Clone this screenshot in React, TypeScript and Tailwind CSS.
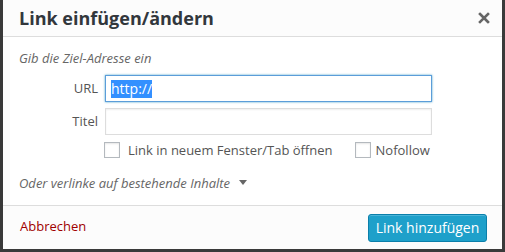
import React from "react";

export default function App() {
  const font = { fontFamily: '"Open Sans", "Noto Sans", sans-serif' };
  return (
    <div className="w-[505px] h-[252px] bg-[#3a3a3a] overflow-hidden" style={font}>
      <div className="ml-[3px] w-[499px] h-[249px] bg-white flex flex-col">
        <div className="h-[37px] shrink-0 bg-[#fcfcfc] border-b border-[#dddddd] flex items-center justify-between pl-[16px] pr-[12px]">
          <div className="text-[18px] font-bold text-[#32373c] leading-none">Link einfügen/ändern</div>
          <svg width="12" height="12" viewBox="0 0 12 12">
            <path d="M2 2 L10 10 M10 2 L2 10" stroke="#666666" strokeWidth="2.6" strokeLinecap="square" />
          </svg>
        </div>
        <div className="flex-1 flex flex-col">
          <div className="mt-[12px] pl-[16px] text-[13px] leading-[18px] italic text-[#666666]">Gib die Ziel-Adresse ein</div>
          <div className="mt-[8px] flex items-center">
            <div className="w-[95px] text-right text-[13px] text-[#555555]">URL</div>
            <div className="ml-[7px] w-[327px] h-[27px] border border-[#5b9dd9] shadow-[0_0_2px_rgba(30,140,190,0.8)] flex items-center pl-[5px]">
              <span className="bg-[#3390ff] text-white text-[14px] leading-[18px]">http://</span>
            </div>
          </div>
          <div className="mt-[6px] flex items-center">
            <div className="w-[95px] text-right text-[13px] text-[#555555]">Titel</div>
            <div className="ml-[7px] w-[327px] h-[27px] border border-[#dddddd] shadow-[inset_0_1px_2px_rgba(0,0,0,0.07)]"></div>
          </div>
          <div className="mt-[7px] flex items-center pl-[101px]">
            <div className="w-[16px] h-[16px] border border-[#b4b9be] shadow-[inset_0_1px_2px_rgba(0,0,0,0.1)]"></div>
            <span className="ml-[8px] text-[13px] text-[#555555] leading-[16px]">Link in neuem Fenster/Tab öffnen</span>
            <div className="ml-[22px] w-[16px] h-[16px] border border-[#b4b9be] shadow-[inset_0_1px_2px_rgba(0,0,0,0.1)]"></div>
            <span className="ml-[5px] text-[13px] text-[#555555] leading-[16px]">Nofollow</span>
          </div>
          <div className="mt-[16px] pl-[16px] flex items-center text-[13px] leading-[18px] italic text-[#666666]">
            <span>Oder verlinke auf bestehende Inhalte</span>
            <svg width="8" height="6" viewBox="0 0 8 6" className="ml-[9px]">
              <path d="M0 0 L8 0 L4 5 Z" fill="#666666" />
            </svg>
          </div>
        </div>
        <div className="h-[44px] shrink-0 bg-[#fcfcfc] border-t border-[#dddddd] flex items-center justify-between pl-[17px] pr-[15px]">
          <span className="text-[13px] text-[#a00000] -mt-[2px]">Abbrechen</span>
          <div className="w-[119px] h-[28px] rounded-[3px] bg-[#1ea0ca] border border-[#0b7faa] text-white text-[14px] flex items-center justify-center shadow-[inset_0_1px_0_rgba(120,200,230,0.5)]">
            Link hinzufügen
          </div>
        </div>
      </div>
    </div>
  );
}
